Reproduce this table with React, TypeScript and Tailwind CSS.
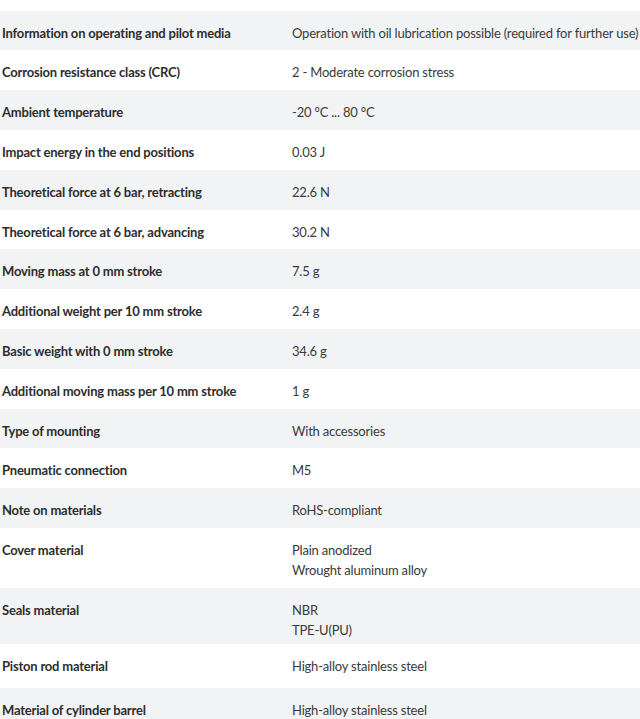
import React from "react";

type Spec = { label: string; values: string[]; h: string };

const specs: Spec[] = [
  { label: "Operating medium", values: ["Compressed air to ISO 8573-1:2010 [7:4:4]"], h: "h-[40px]" },
  { label: "Information on operating and pilot media", values: ["Operation with oil lubrication possible (required for further use)"], h: "h-[39px]" },
  { label: "Corrosion resistance class (CRC)", values: ["2 - Moderate corrosion stress"], h: "h-[40px]" },
  { label: "Ambient temperature", values: ["-20 °C ... 80 °C"], h: "h-[40px]" },
  { label: "Impact energy in the end positions", values: ["0.03 J"], h: "h-[40px]" },
  { label: "Theoretical force at 6 bar, retracting", values: ["22.6 N"], h: "h-[40px]" },
  { label: "Theoretical force at 6 bar, advancing", values: ["30.2 N"], h: "h-[39px]" },
  { label: "Moving mass at 0 mm stroke", values: ["7.5 g"], h: "h-[40px]" },
  { label: "Additional weight per 10 mm stroke", values: ["2.4 g"], h: "h-[40px]" },
  { label: "Basic weight with 0 mm stroke", values: ["34.6 g"], h: "h-[40px]" },
  { label: "Additional moving mass per 10 mm stroke", values: ["1 g"], h: "h-[40px]" },
  { label: "Type of mounting", values: ["With accessories"], h: "h-[39px]" },
  { label: "Pneumatic connection", values: ["M5"], h: "h-[40px]" },
  { label: "Note on materials", values: ["RoHS-compliant"], h: "h-[40px]" },
  { label: "Cover material", values: ["Plain anodized", "Wrought aluminum alloy"], h: "h-[60px]" },
  { label: "Seals material", values: ["NBR", "TPE-U(PU)"], h: "h-[56px]" },
  { label: "Piston rod material", values: ["High-alloy stainless steel"], h: "h-[44px]" },
  { label: "Material of cylinder barrel", values: ["High-alloy stainless steel"], h: "h-[40px]" },
];

export default function App() {
  return (
    <div
      className="w-[640px] h-[719px] overflow-hidden bg-white text-[#333]"
      style={{ fontFamily: "Lato, 'Noto Sans', sans-serif" }}
    >
      {/* first row is cut at the top edge */}
      <div className="-mt-[29px]">
        {specs.map((s, i) => (
          <div
            key={s.label}
            className={`flex ${s.h} pt-[12px] ${i % 2 === 1 ? "bg-[#f2f3f5]" : "bg-white"}`}
          >
            <div className="w-[290px] shrink-0 pl-[2px] text-[13px] leading-[20px] font-bold tracking-[-0.2px] text-[#2d2d2d] whitespace-nowrap">
              {s.label}
            </div>
            <div className="min-w-0 pl-[2px] text-[13px] leading-[20px] tracking-[-0.2px] text-[#3a3a3a] whitespace-nowrap">
              {s.values.map((v) => (
                <div key={v}>{v}</div>
              ))}
            </div>
          </div>
        ))}
      </div>
    </div>
  );
}
